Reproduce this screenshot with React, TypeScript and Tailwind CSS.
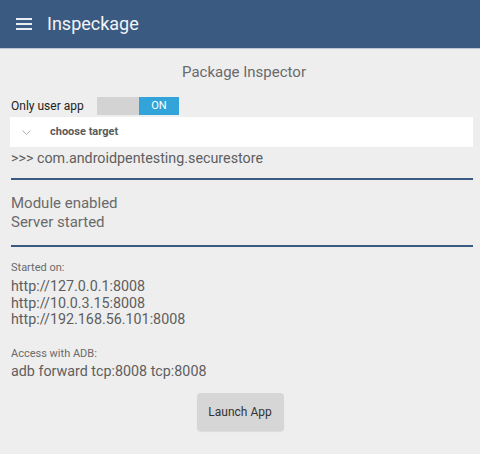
import React from 'react'

const URLS = ['http://127.0.0.1:8008', 'http://10.0.3.15:8008', 'http://192.168.56.101:8008']

export default function App() {
  return (
    <div className="w-[480px] h-[454px] bg-[#eeeeee] overflow-hidden" style={{ fontFamily: 'Roboto, "Noto Sans", sans-serif' }}>
      {/* App bar */}
      <header className="h-[49px] bg-[#3b5a81] flex items-center border-b border-[#b9c4d4]">
        <svg width="16" height="12" viewBox="0 0 16 12" className="ml-[16px]">
          <rect x="0" y="0" width="16" height="2" fill="#e8edf3" />
          <rect x="0" y="5" width="16" height="2" fill="#e8edf3" />
          <rect x="0" y="10" width="16" height="2" fill="#e8edf3" />
        </svg>
        <span className="ml-[15px] text-[18px] text-[#f2f4f7] leading-none pb-[1px]">Inspeckage</span>
      </header>

      <main className="px-[11px] pr-[7px]">
        <h1 className="text-center text-[15px] text-[#6a6a6a] mt-[14px] leading-[19px] pl-[4px]">Package Inspector</h1>

        {/* Only user app toggle */}
        <div className="flex items-center mt-[15px] h-[18px]">
          <span className="text-[12px] text-[#222] w-[86px]">Only user app</span>
          <div className="flex h-[18px]">
            <div className="w-[42px] bg-[#d3d3d3]" />
            <div className="w-[40px] bg-[#33a4d9] text-white text-[11px] flex items-center justify-center">ON</div>
          </div>
        </div>

        {/* Target select */}
        <div className="mt-[2px] ml-[-1px] h-[30px] bg-white flex items-center">
          <svg width="9" height="5" viewBox="0 0 9 5" className="ml-[12px]">
            <path d="M0.5 0.5 L4.5 4.5 L8.5 0.5" fill="none" stroke="#b0b0b0" strokeWidth="1" />
          </svg>
          <span className="ml-[19px] text-[11px] font-bold text-[#5a5a5a]">choose target</span>
        </div>

        <div className="text-[14.3px] text-[#5e5e5e] leading-[18px] mt-[2px]">&gt;&gt;&gt; com.androidpentesting.securestore</div>

        <div className="h-[2px] bg-[#3b5a81] mt-[11px]" />

        <div className="text-[15px] text-[#6a6a6a] leading-[19px] mt-[14px]">
          <div>Module enabled</div>
          <div>Server started</div>
        </div>

        <div className="h-[2px] bg-[#3b5a81] mt-[13px]" />

        <div className="text-[11px] text-[#6a6a6a] leading-[14px] mt-[14px]">Started on:</div>
        <div className="text-[14.3px] text-[#5e5e5e] leading-[16.5px] mt-[3px]">
          {URLS.map(u => (
            <div key={u}>{u}</div>
          ))}
        </div>

        <div className="text-[11px] text-[#6a6a6a] leading-[14px] mt-[19px]">Access with ADB:</div>
        <div className="text-[14.3px] text-[#5e5e5e] leading-[17px] mt-[2px]">adb forward tcp:8008 tcp:8008</div>

        <div className="flex justify-center mt-[13px] pr-[4px]">
          <button className="w-[87px] h-[38px] rounded-[4px] bg-[#d6d6d6] text-[12px] text-[#333] shadow-[0_1px_1px_rgba(0,0,0,0.08)]">Launch App</button>
        </div>
      </main>
    </div>
  )
}
